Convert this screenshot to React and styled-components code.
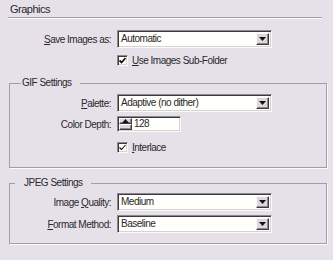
import React from "react"
import styled, { createGlobalStyle } from "styled-components"

const GlobalStyle = createGlobalStyle`
  html, body {
    margin: 0;
    padding: 0;
    background: #e6e1e8;
  }
  body {
    font-family: "Liberation Sans", Arial, sans-serif;
    font-size: 10px;
    letter-spacing: -0.5px;
    color: #2a282c;
  }
`

const Panel = styled.div`
  width: 333px;
  height: 260px;
  background: #e6e1e8;
  overflow: hidden;
`

const Heading = styled.div`
  height: 15px;
  padding: 2px 0 0 10px;
  font-size: 11px;
  line-height: 15px;
`

const Rule = styled.div`
  margin-left: 8px;
  width: 314px;
  border-top: 1px solid #a29ea6;
  border-bottom: 1px solid #fbfbfb;
`

const Row = styled.div`
  display: grid;
  grid-template-columns: ${props => props.labelWidth ?? 101}px auto;
  column-gap: 6px;
  align-items: center;
  margin-top: ${props => props.top ?? 0}px;
`

const Label = styled.label`
  text-align: right;
  white-space: nowrap;
`

const Key = styled.span`
  text-decoration: underline;
`

/* Etched group box with its title sitting in the top line */
const Group = styled.fieldset`
  margin: ${props => props.top}px 0 0 9px;
  padding: ${props => props.padTop}px 0 ${props => props.padBottom}px;
  width: 318px;
  min-width: 0;
  box-sizing: border-box;
  border: 1px solid #a29ea6;
  box-shadow: 1px 1px 0 #fbfbfb;
`

const Legend = styled.legend`
  margin-left: ${props => props.offset}px;
  padding: 0 8px 0 ${props => props.padLeft}px;
  line-height: 14px;
`

const Stack = styled.div`
  display: flex;
  flex-direction: column;
  gap: 4px;
`

const Sunken = styled.div`
  box-sizing: border-box;
  background: #fffffb;
  border: 1px solid;
  border-color: #8c8890 #fbfbf4 #fbfbf4 #8c8890;
  box-shadow: inset 1px 1px 0 #3c3a3e, inset -1px -1px 0 #d6d2d8;
`

const SelectBox = styled(Sunken)`
  display: flex;
  width: 155px;
  height: 18px;
`

const Value = styled.span`
  flex: 1;
  padding-left: 3px;
  line-height: 16px;
  white-space: nowrap;
`

const Raised = styled.div`
  box-sizing: border-box;
  display: flex;
  align-items: center;
  justify-content: center;
  background: #dcd8de;
  border: 1px solid;
  border-color: #fbfbfb #3c3a3e #3c3a3e #fbfbfb;
  box-shadow: inset -1px -1px 0 #8c8890;
`

const DropButton = styled(Raised)`
  width: 13px;
  margin: 2px 2px 2px 0;
`

const Spinner = styled(Sunken)`
  display: flex;
  width: 64px;
  height: 16px;
`

const SpinButtons = styled.div`
  display: flex;
  flex-direction: column;
  width: 13px;
  margin: 1px 0 1px 1px;
`

const SpinButton = styled(Raised)`
  flex: 1;
`

const SpinValue = styled.span`
  padding-left: 2px;
  line-height: 14px;
`

const CheckRow = styled.div`
  display: flex;
  align-items: center;
  gap: 4px;
  height: 13px;
`

const CheckBox = styled(Sunken)`
  display: flex;
  align-items: center;
  justify-content: center;
  width: 11px;
  height: 11px;
`

const Arrow = ({ up }) => (
  <svg width="7" height="4" viewBox="0 0 7 4">
    <polygon points={up ? "3.5,0 7,4 0,4" : "0,0 7,0 3.5,4"} fill="#111" />
  </svg>
)

const Tick = ({ bold }) => (
  <svg width="7" height="7" viewBox="0 0 7 7">
    <polyline points="0.5,3.5 2.5,5.5 6.5,1" fill="none" stroke="#111" strokeWidth={bold ? 1.8 : 1.1} />
  </svg>
)

const Select = ({ value }) => (
  <SelectBox>
    <Value>{value}</Value>
    <DropButton>
      <Arrow />
    </DropButton>
  </SelectBox>
)

const Check = ({ bold, children }) => (
  <CheckRow>
    <CheckBox>
      <Tick bold={bold} />
    </CheckBox>
    <span>{children}</span>
  </CheckRow>
)

export default function App() {
  return (
    <Panel>
      <GlobalStyle />
      <Heading>Graphics</Heading>
      <Rule />

      <Row labelWidth={111} top={11}>
        <Label>
          <Key>S</Key>ave Images as:
        </Label>
        <Select value="Automatic" />
      </Row>
      <Row labelWidth={111} top={6}>
        <span />
        <Check bold>
          <Key>U</Key>se Images Sub-Folder
        </Check>
      </Row>

      <Group top={9} padTop={4} padBottom={13}>
        <Legend offset={11} padLeft={1}>GIF Settings</Legend>
        <Stack>
          <Row>
            <Label>
              <Key>P</Key>alette:
            </Label>
            <Select value="Adaptive (no dither)" />
          </Row>
          <Row>
            <Label>Color Depth:</Label>
            <Spinner>
              <SpinButtons>
                <SpinButton>
                  <Arrow up />
                </SpinButton>
                <SpinButton />
              </SpinButtons>
              <SpinValue>128</SpinValue>
            </Spinner>
          </Row>
        </Stack>
        <Row top={9}>
          <span />
          <Check>
            <Key>I</Key>nterlace
          </Check>
        </Row>
      </Group>

      <Group top={8} padTop={3} padBottom={10}>
        <Legend offset={5} padLeft={9}>JPEG Settings</Legend>
        <Stack>
          <Row>
            <Label>
              Image <Key>Q</Key>uality:
            </Label>
            <Select value="Medium" />
          </Row>
          <Row>
            <Label>
              <Key>F</Key>ormat Method:
            </Label>
            <Select value="Baseline" />
          </Row>
        </Stack>
      </Group>
    </Panel>
  )
}
